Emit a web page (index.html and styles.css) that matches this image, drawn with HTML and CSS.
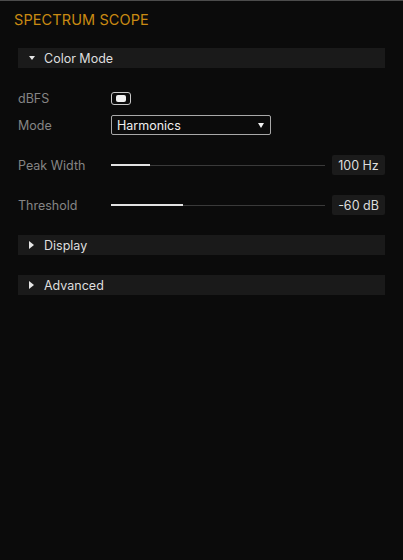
FILE: index.html
```html
<!DOCTYPE html>
<html>
<head>
<meta charset="utf-8">
<link rel="stylesheet" href="styles.css">
</head>
<body>
<div class="panel">
  <div class="title">SPECTRUM SCOPE</div>

  <div class="section">
    <div class="sec-head"><span class="tri-down"></span><span class="sec-name">Color Mode</span></div>
    <div class="sec-body">
      <div class="row">
        <div class="label">dBFS</div>
        <div class="toggle"><div class="knob"></div></div>
      </div>
      <div class="row row-mode">
        <div class="label">Mode</div>
        <div class="select"><span>Harmonics</span><span class="sel-arrow"></span></div>
      </div>
      <div class="row row-slider">
        <div class="label">Peak Width</div>
        <div class="track"><div class="fill" style="width:39px"></div></div>
        <div class="value">100 Hz</div>
      </div>
      <div class="row row-slider">
        <div class="label">Threshold</div>
        <div class="track"><div class="fill" style="width:72px"></div></div>
        <div class="value">-60 dB</div>
      </div>
    </div>
  </div>

  <div class="section">
    <div class="sec-head"><span class="tri-right"></span><span class="sec-name">Display</span></div>
  </div>

  <div class="section section-gap">
    <div class="sec-head"><span class="tri-right"></span><span class="sec-name">Advanced</span></div>
  </div>
</div>
</body>
</html>
```

FILE: styles.css
```css
html, body {
  margin: 0;
  padding: 0;
  background: #0b0b0b;
}
body {
  font-family: Inter, "Noto Sans", sans-serif;
}
.panel {
  box-sizing: border-box;
  width: 403px;
  height: 560px;
  border-top: 1px solid #4c4c4c;
  padding: 11px 18px 0 18px;
  background: #0b0b0b;
}
.title {
  margin-left: -4px;
  color: #c98a12;
  font-size: 14.5px;
  line-height: 16px;
  height: 16px;
  letter-spacing: 0.1px;
}
.section {
  margin-top: 20px;
}
.sec-head {
  display: flex;
  align-items: center;
  height: 20px;
  background: #1a1a1a;
  padding-left: 11px;
}
.sec-name {
  color: #dedede;
  font-size: 12.5px;
  margin-left: 9px;
}
.tri-down {
  width: 0;
  height: 0;
  border-left: 3px solid transparent;
  border-right: 3px solid transparent;
  border-top: 4px solid #e6e6e6;
}
.tri-right {
  width: 0;
  height: 0;
  border-top: 4px solid transparent;
  border-bottom: 4px solid transparent;
  border-left: 5px solid #e6e6e6;
  margin-right: 1px;
}
.sec-body {
  padding: 20px 0 0 0;
}
.row {
  display: flex;
  align-items: center;
  height: 20px;
}
.row-mode {
  margin-top: 7px;
}
.row-slider {
  margin-top: 20px;
}
.label {
  width: 93px;
  flex: none;
  color: #858585;
  font-size: 12.5px;
}
.toggle {
  box-sizing: border-box;
  width: 20px;
  height: 13px;
  border: 1px solid #c8c8c8;
  border-radius: 3px;
  display: flex;
  align-items: center;
  justify-content: center;
}
.knob {
  width: 10px;
  height: 7px;
  border-radius: 2px;
  background: #f0f0f0;
}
.select {
  box-sizing: border-box;
  width: 160px;
  height: 20px;
  border: 1px solid #a8a8a8;
  border-radius: 2px;
  display: flex;
  align-items: center;
  justify-content: space-between;
  padding: 0 6px 0 5px;
  color: #efefef;
  font-size: 12.5px;
}
.sel-arrow {
  width: 0;
  height: 0;
  border-left: 3.5px solid transparent;
  border-right: 3.5px solid transparent;
  border-top: 5px solid #f0f0f0;
}
.track {
  flex: none;
  width: 214px;
  height: 1px;
  background: #3a3a3a;
  position: relative;
}
.fill {
  position: absolute;
  left: 0;
  top: -1px;
  height: 2px;
  background: #e2e2e2;
}
.value {
  box-sizing: border-box;
  margin-left: 7px;
  width: 54px;
  height: 20px;
  background: #1b1b1b;
  border-radius: 2px;
  color: #dedede;
  font-size: 12.5px;
  display: flex;
  align-items: center;
  justify-content: center;
}
```
